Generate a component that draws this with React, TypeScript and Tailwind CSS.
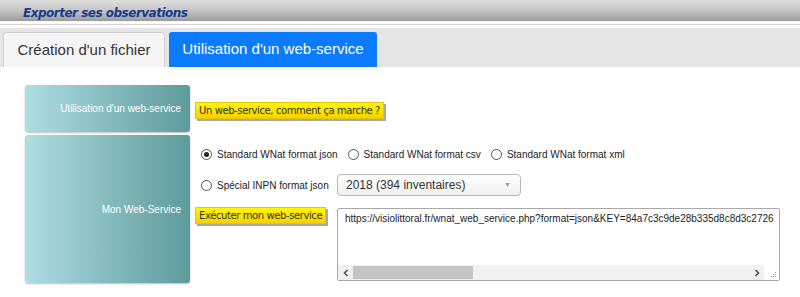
const sans = "font-['Liberation_Sans',Arial,sans-serif]"
const verd = "font-['DejaVu_Sans',Verdana,sans-serif]"

function Radio({ checked = false, label }: { checked?: boolean; label: string }) {
  return (
    <label className="flex items-center gap-[5px]">
      <span className="flex h-[11px] w-[11px] items-center justify-center rounded-full border border-[#555] bg-white">
        {checked && <span className="h-[5px] w-[5px] rounded-full bg-[#222]" />}
      </span>
      <span>{label}</span>
    </label>
  )
}

function YellowButton({ children }: { children: string }) {
  return (
    <button
      className={`${verd} h-[17px] border border-[#e8c600] bg-linear-to-b from-[#fff700] to-[#f6d200] px-[3px] text-[10px] leading-[15px] tracking-[-0.4px] text-[#333] shadow-[2px_2px_0_#a8a8a8]`}
    >
      {children}
    </button>
  )
}

function Label({ text, className }: { text: string; className: string }) {
  return (
    <div
      className={`flex w-[165px] items-center justify-end rounded-[3px] bg-linear-to-r from-[#aedde3] to-[#5e9b9c] pr-[9px] text-[10px] text-white shadow-[0_1px_2px_rgba(0,0,0,0.25)] ${className}`}
    >
      {text}
    </div>
  )
}

export default function App() {
  return (
    <div className={`${sans} h-[297px] w-[800px] overflow-hidden bg-white text-[#222]`}>
      <div className="h-[21px] border-b border-[#999] bg-linear-to-b from-[#dedede] via-[#c6c6c6] to-[#a0a0a0] pl-[23px]">
        <span className={`${verd} text-[12px] font-bold italic leading-[17px] tracking-[-0.5px] text-[#173a91]`}>
          Exporter ses observations
        </span>
      </div>
      <div className="mt-[3px] h-px bg-[#d4d4d4]" />
      <div className="mt-[3px] flex h-[39px] items-end gap-[4px] bg-[#e5e5e5] pl-[3px]">
        <div className="flex h-[35px] w-[162px] items-center justify-center rounded-t-[3px] border border-b-0 border-[#cfcfcf] bg-[#f5f5f5] text-[15px] text-[#333]">
          Création d'un fichier
        </div>
        <div className="flex h-[35px] w-[208px] items-center justify-center rounded-t-[3px] bg-[#0b7cff] text-[15px] text-white">
          Utilisation d'un web-service
        </div>
      </div>

      <div className="ml-[25px] mt-[18px] flex flex-col gap-[3px]">
        <div className="flex gap-[5px]">
          <Label text="Utilisation d'un web-service" className="h-[47px]" />
          <div className="pt-[12px]">
            <YellowButton>Un web-service, comment ça marche ?</YellowButton>
          </div>
        </div>

        <div className="flex gap-[5px]">
          <Label text="Mon Web-Service" className="h-[148px]" />
          <div className="flex flex-col text-[10px]">
            <div className="mt-[8px] flex h-[22px] items-center gap-[10px] pl-[6px]">
              <Radio checked label="Standard WNat format json" />
              <Radio label="Standard WNat format csv" />
              <Radio label="Standard WNat format xml" />
            </div>
            <div className="mt-[9px] flex h-[22px] items-center">
              <div className="w-[142px] pl-[6px]">
                <Radio label="Spécial INPN format json" />
              </div>
              <div className="flex h-[22px] w-[184px] items-center justify-between rounded-[4px] border border-[#b8b8b8] bg-linear-to-b from-white to-[#f0f0f0] pl-[8px] pr-[9px] text-[12px] text-[#333]">
                <span>2018 (394 inventaires)</span>
                <span className="text-[7px] text-[#999]">▼</span>
              </div>
            </div>
            <div className="mt-[12px] flex items-start">
              <div className="-mt-px w-[142px]">
                <YellowButton>Exécuter mon web-service</YellowButton>
              </div>
              <div className="flex h-[73px] w-[443px] flex-col overflow-hidden rounded-[2px] border border-[#a9a9a9] bg-white">
                <div className="flex-1 overflow-hidden whitespace-nowrap pl-[7px] pt-[2px] text-[10px] text-[#222]">
                  https://visiolittoral.fr/wnat_web_service.php?format=json&amp;KEY=84a7c3c9de28b335d8c8d3c2726
                </div>
                <div className="flex h-[15px] bg-[#f1f1f1]">
                  <div className="flex w-[15px] items-center justify-center">
                    <svg width="6" height="8" viewBox="0 0 6 8">
                      <path d="M4.5 1 L1.5 4 L4.5 7" fill="none" stroke="#505050" strokeWidth="1.6" />
                    </svg>
                  </div>
                  <div className="flex flex-1 items-center">
                    <div className="h-[13px] w-[120px] bg-[#c4c4c4]" />
                  </div>
                  <div className="flex w-[15px] items-center justify-center">
                    <svg width="6" height="8" viewBox="0 0 6 8">
                      <path d="M1.5 1 L4.5 4 L1.5 7" fill="none" stroke="#505050" strokeWidth="1.6" />
                    </svg>
                  </div>
                  <div className="flex w-[15px] items-end justify-end bg-white p-[2px]">
                    <svg width="7" height="7" viewBox="0 0 7 7">
                      <rect x="5" y="1" width="1" height="1" fill="#999" />
                      <rect x="3" y="3" width="1" height="1" fill="#999" />
                      <rect x="5" y="3" width="1" height="1" fill="#999" />
                      <rect x="1" y="5" width="1" height="1" fill="#999" />
                      <rect x="3" y="5" width="1" height="1" fill="#999" />
                      <rect x="5" y="5" width="1" height="1" fill="#999" />
                    </svg>
                  </div>
                </div>
              </div>
            </div>
          </div>
        </div>
      </div>
    </div>
  )
}
